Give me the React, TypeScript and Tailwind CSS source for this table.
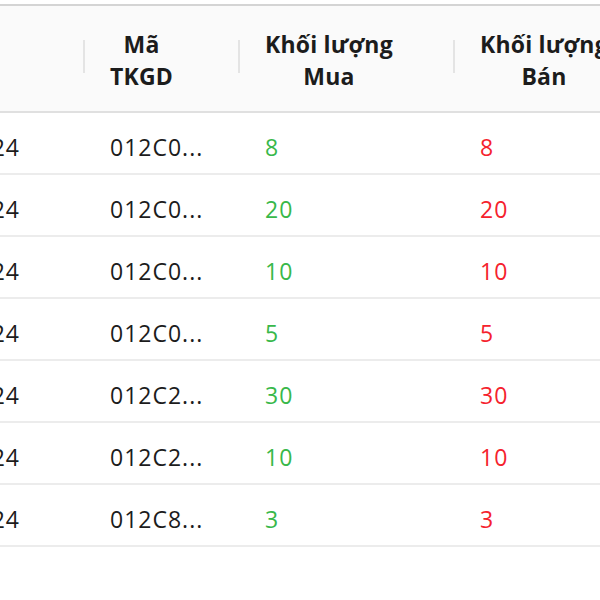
const rows = [
  { date: '15/03/2024', code: '012C0...', buy: 8, sell: 8 },
  { date: '15/03/2024', code: '012C0...', buy: 20, sell: 20 },
  { date: '15/03/2024', code: '012C0...', buy: 10, sell: 10 },
  { date: '15/03/2024', code: '012C0...', buy: 5, sell: 5 },
  { date: '15/03/2024', code: '012C2...', buy: 30, sell: 30 },
  { date: '15/03/2024', code: '012C2...', buy: 10, sell: 10 },
  { date: '15/03/2024', code: '012C8...', buy: 3, sell: 3 },
];

function Divider() {
  return <span className="absolute right-0 top-[34px] h-[33px] w-[2px] bg-[#e4e4e4]" />;
}

function HeadCell({ lines, last }: { lines: string[]; last?: boolean }) {
  return (
    <th className="relative px-[25px] pt-[4px] text-left align-middle font-bold">
      <span className="inline-block text-center leading-[32px]">
        {lines.map((l, i) => (
          <span key={i} className="block whitespace-nowrap">
            {l}
          </span>
        ))}
      </span>
      {!last && <Divider />}
    </th>
  );
}

export default function App() {
  return (
    <div
      className="h-[600px] w-[600px] overflow-hidden bg-white pt-[4px] text-[#1c1c1c]"
      style={{ fontFamily: '"Open Sans", "Noto Sans", sans-serif' }}
    >
      <table className="-ml-[115px] w-[915px] table-fixed border-collapse border-t-2 border-[#d4d4d4]">
        <colgroup>
          <col className="w-[200px]" />
          <col className="w-[155px]" />
          <col className="w-[215px]" />
          <col className="w-[345px]" />
        </colgroup>
        <thead className="text-[23px] tracking-[0.2px]">
          <tr className="h-[107px] border-b-2 border-[#e0e0e0] bg-[#fafafa]">
            <th className="relative">
              <Divider />
            </th>
            <HeadCell lines={['Mã', 'TKGD']} />
            <HeadCell lines={['Khối lượng', 'Mua']} />
            <HeadCell lines={['Khối lượng', 'Bán']} last />
          </tr>
        </thead>
        <tbody className="text-[23px] tracking-[1px]">
          {rows.map((r, i) => (
            <tr key={i} className="h-[62px] border-b-2 border-[#ececec]">
              <td className="whitespace-nowrap pr-[65px] pt-[8px] text-right">{r.date}</td>
              <td className="whitespace-nowrap px-[25px] pt-[8px]">{r.code}</td>
              <td className="px-[25px] pt-[8px] text-[#38b84a]">{r.buy}</td>
              <td className="px-[25px] pt-[8px] text-[#f5222d]">{r.sell}</td>
            </tr>
          ))}
        </tbody>
      </table>
    </div>
  );
}
